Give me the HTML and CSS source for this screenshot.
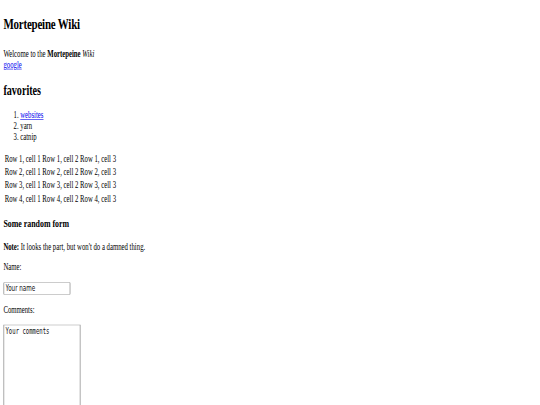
FILE: index.html
```html
<!DOCTYPE html>
<html>
<head>
<meta charset="utf-8">
<title>Mortepeine Wiki</title>
<link rel="stylesheet" href="styles.css">
</head>
<body class="body">
<div class="page">
<h1 class="title">Mortepeine Wiki</h1>
<p>Welcome to the <b>Mortepeine</b> <i>Wiki</i><br><a href="#">google</a></p>
<h2>favorites</h2>
<ol>
<li><a href="#">websites</a></li>
<li>yarn</li>
<li>catnip</li>
</ol>
<table class="grid">
<tr><td>Row 1, cell 1</td><td>Row 1, cell 2</td><td>Row 1, cell 3</td></tr>
<tr><td>Row 2, cell 1</td><td>Row 2, cell 2</td><td>Row 2, cell 3</td></tr>
<tr><td>Row 3, cell 1</td><td>Row 3, cell 2</td><td>Row 3, cell 3</td></tr>
<tr><td>Row 4, cell 1</td><td>Row 4, cell 2</td><td>Row 4, cell 3</td></tr>
</table>
<h3>Some random form</h3>
<p><b>Note:</b> It looks the part, but won't do a damned thing.</p>
<form class="form">
<p>Name:</p>
<input class="name" type="text" value="Your name">
<p>Comments:</p>
<textarea class="comments" rows="10" cols="20">Your comments</textarea>
</form>
</div>
</body>
</html>
```
FILE: styles.css
```css
.body {
  margin: 0;
  overflow: hidden;
  background: #fff;
}
.page {
  display: flow-root;
  padding: 5px 8px 8px;
  transform: scale(0.421875, 0.598);
  transform-origin: 0 0;
  font-family: "Liberation Serif", serif;
  font-size: 16px;
  color: #000;
}
.title {
  font-size: 26px;
  letter-spacing: -0.5px;
  line-height: 36.8px;
  margin: 17px 0 22.88px;
}
.name {
  font-family: "DejaVu Sans", sans-serif;
  font-size: 13.333px;
  color: #111;
  box-sizing: border-box;
  width: 159px;
  height: 21px;
  padding: 1px 3px;
  border-style: solid;
  border-color: #9a9a9a;
  border-width: 1.7px 2.4px;
  border-radius: 2px;
  background: #fff;
}
.comments {
  font-family: "DejaVu Sans Mono", monospace;
  font-size: 13.333px;
  color: #111;
  box-sizing: border-box;
  width: 183px;
  height: 240px;
  padding: 2px 3px;
  border-style: solid;
  border-color: #9a9a9a;
  border-width: 1.7px 2.4px;
  background: #fff;
}
```
